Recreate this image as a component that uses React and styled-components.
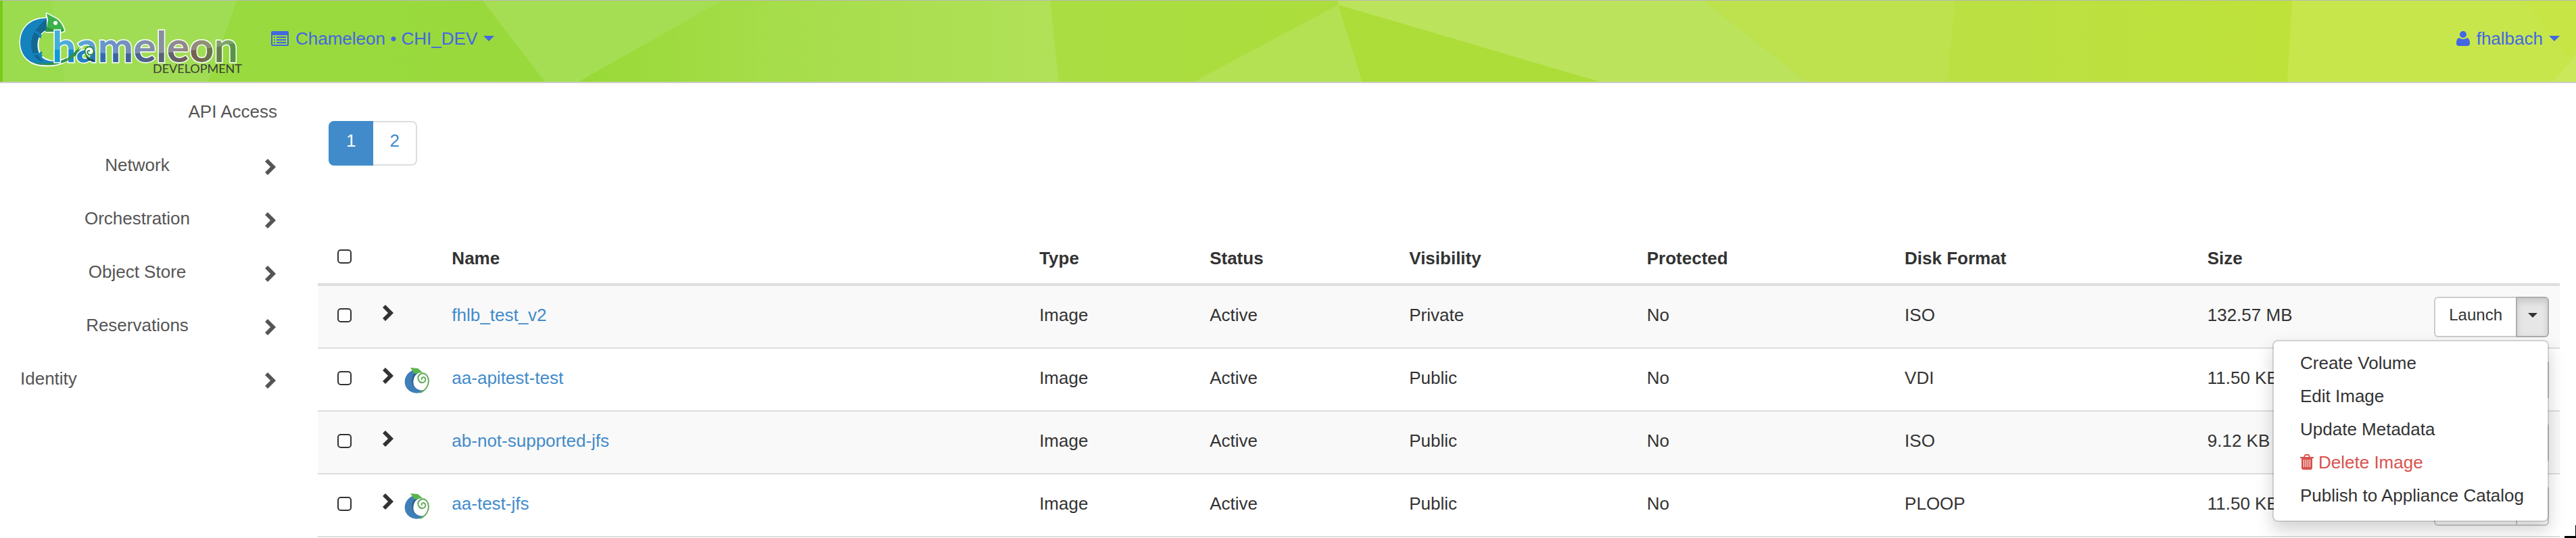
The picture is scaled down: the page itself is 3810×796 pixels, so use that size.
import React from 'react';
import styled, { createGlobalStyle, css } from 'styled-components';

const GlobalStyle = createGlobalStyle`
  *, *::before, *::after { box-sizing: border-box; }
  body {
    margin: 0;
    background: #fff;
    color: #333;
    font: 26px/38px "Liberation Sans", Arial, sans-serif;
  }
  button, input { font: inherit; color: inherit; }
  a { text-decoration: none; }
  ul { list-style: none; margin: 0; padding: 0; }
`;

const Header = styled.header`
  position: relative;
  display: flex;
  align-items: flex-start;
  height: 123px;
  padding: 0 24px 0 28px;
  border-top: 1px solid #b8b8b8;
  border-bottom: 2px solid #ccc;
  background: #a9de44;
`;

const Backdrop = styled.svg`
  position: absolute;
  inset: 0;
  width: 100%;
  height: 100%;
`;

const Brand = styled.a`
  position: relative;
  display: block;
  height: 120px;
  margin-right: 33px;
  svg { display: block; }
`;

const NavMenu = styled.button`
  position: relative;
  display: flex;
  align-items: center;
  height: 38px;
  margin-top: 37px;
  margin-left: ${(p) => (p.$right ? 'auto' : '0')};
  padding: 0;
  border: 0;
  background: none;
  color: #4366e4;
  cursor: pointer;
`;

const NavLabel = styled.span`
  margin: 0 9px 0 10px;
`;

const Caret = styled.span`
  width: 0;
  height: 0;
  border: solid transparent;
  border-width: ${(p) => (p.$small ? '7px 7px 0' : '8px 8px 0')};
  border-top-color: currentColor;
`;

const Columns = styled.div`
  display: flex;
  align-items: flex-start;
  padding-right: 24px;
`;

const Sidebar = styled.nav`
  flex: none;
  width: 470px;
  padding: 21px 58px 0 30px;
`;

const SideLink = styled.a`
  display: flex;
  align-items: center;
  justify-content: space-between;
  height: 79px;
  padding-bottom: 37px;
  color: #555;
  svg { margin: 6px 4px 0 0; }
`;

const SideText = styled.span`
  ${(p) => p.$align === 'center' && css`width: 346px; text-align: center;`}
  ${(p) => p.$align === 'right' && css`width: 100%; padding-right: 2px; text-align: right;`}
`;

const Main = styled.main`
  flex: 1;
  min-width: 0;
  padding-top: 56px;
`;

const Pagination = styled.ul`
  display: flex;
  height: 66px;
  margin: 0 0 91px 16px;
`;

const PageLink = styled.a`
  display: block;
  height: 66px;
  padding: 8px 24px;
  border: 2px solid ${(p) => (p.$active ? '#428bca' : '#ddd')};
  border-left-width: ${(p) => (p.$active ? '2px' : '0')};
  border-radius: ${(p) => (p.$active ? '8px 0 0 8px' : '0 8px 8px 0')};
  background: ${(p) => (p.$active ? '#428bca' : '#fff')};
  color: ${(p) => (p.$active ? '#fff' : '#428bca')};
`;

const Table = styled.table`
  width: 100%;
  table-layout: fixed;
  border-collapse: separate;
  border-spacing: 0;
`;

const HeadCell = styled.th`
  height: 87px;
  padding: 27px 16px 18px;
  border-bottom: 4px solid #ddd;
  text-align: left;
  vertical-align: top;
  font-weight: bold;
`;

const Row = styled.tr`
  background: ${(p) => (p.$striped ? '#f9f9f9' : '#fff')};
`;

const Cell = styled.td`
  height: 93px;
  padding: 24px 16px 0;
  border-bottom: 2px solid #ddd;
  vertical-align: top;
  white-space: nowrap;
`;

const ActionCell = styled(Cell)`
  padding-top: 16px;
`;

const CheckBox = styled.input`
  appearance: none;
  display: block;
  width: 21px;
  height: 21px;
  margin: ${(p) => (p.$head ? '6px' : '9px')} 0 0 13px;
  border: 2px solid #333;
  border-radius: 5px;
  background: #fff;
`;

const Expander = styled.button`
  display: flex;
  align-items: flex-start;
  gap: 16px;
  padding: 4px 0 0;
  border: 0;
  background: none;
  svg { display: block; }
`;

const NameLink = styled.a`
  color: #428bca;
`;

const ButtonGroup = styled.div`
  position: relative;
  display: flex;
  justify-content: flex-end;
`;

const ActionButton = styled.button`
  flex: none;
  height: 60px;
  padding: 0 20px 6px;
  border: 2px solid #ccc;
  border-right: 0;
  border-radius: 6px 0 0 6px;
  background: #fff;
  font-size: 24px;
`;

const ToggleButton = styled.button`
  display: flex;
  flex: none;
  align-items: center;
  justify-content: center;
  width: 49px;
  height: 60px;
  padding: 0 0 6px;
  border: 2px solid ${(p) => (p.$open ? '#adadad' : '#ccc')};
  border-radius: 0 6px 6px 0;
  background: ${(p) => (p.$open ? '#e6e6e6' : '#fff')};
  box-shadow: ${(p) => (p.$open ? 'inset 0 6px 10px rgba(0, 0, 0, 0.125)' : 'none')};
`;

const Dropdown = styled.ul`
  position: absolute;
  top: 64px;
  right: 0;
  z-index: 10;
  width: 409px;
  padding: 10px 0;
  border: 2px solid rgba(0, 0, 0, 0.15);
  border-radius: 8px;
  background: #fff;
  background-clip: padding-box;
  box-shadow: 0 12px 24px rgba(0, 0, 0, 0.175);
`;

const DropdownItem = styled.button`
  display: flex;
  align-items: center;
  gap: 7px;
  width: 100%;
  height: 49px;
  padding: 0 39px 6px;
  border: 0;
  background: none;
  color: ${(p) => (p.$danger ? '#d9534f' : '#333')};
  text-align: left;
  white-space: nowrap;
`;

const CornerMark = styled.svg`
  position: absolute;
  top: 777px;
  right: 0;
`;

const HeaderBackdrop = () => (
  <Backdrop viewBox="0 0 3810 120" preserveAspectRatio="none" aria-hidden="true">
    <defs>
      <linearGradient id="bg">
        <stop offset="0" stopColor="#98dc42" />
        <stop offset="0.19" stopColor="#99d93c" />
        <stop offset="0.4" stopColor="#a9dd42" />
        <stop offset="0.52" stopColor="#acdd3c" />
        <stop offset="0.76" stopColor="#bae043" />
        <stop offset="0.89" stopColor="#bfe23a" />
        <stop offset="1" stopColor="#c6e648" />
      </linearGradient>
      <linearGradient id="fold">
        <stop offset="0" stopColor="#98d936" />
        <stop offset="0.4" stopColor="#a6dd4a" />
        <stop offset="1" stopColor="#b1e158" />
      </linearGradient>
    </defs>
    <rect width="3810" height="120" fill="url(#bg)" />
    <path d="M4 0H350L308 120H4Z" fill="#a0dd55" />
    <path d="M4 0H76L96 120H4Z" fill="#9bdb4e" />
    <rect width="4" height="120" fill="#79c91c" />
    <path d="M714 0H1068L856 120H806Z" fill="#a5de53" />
    <path d="M1068 0H1553L1566 120H856Z" fill="url(#fold)" />
    <path d="M1980 6L2015 120H1766Z" fill="#b4e154" />
    <path d="M1979 0H2520L2672 120H2366L1979 10Z" fill="#bce35c" />
    <path d="M1979 6L2366 120H2015Z" fill="#acdd38" />
    <path d="M2520 0H2892L2880 120H2672Z" fill="#bde24d" />
    <path d="M3390 0H3810V120H3383Z" fill="#c6e64c" />
    <path d="M3734 0H3810V70L3800 85Z" fill="#c7e545" />
    <path d="M3810 80V120H3776Z" fill="#cae85a" />
  </Backdrop>
);

const BrandLogo = () => (
  <svg width="340" height="120" viewBox="28 1 340 120" role="img" aria-label="Chameleon Development">
    <defs>
      <linearGradient id="word" x1="0" x2="1">
        <stop offset="0" stopColor="#3db0dc" />
        <stop offset="0.12" stopColor="#55a9d6" />
        <stop offset="0.3" stopColor="#6b93c8" />
        <stop offset="0.58" stopColor="#8b8e9c" />
        <stop offset="0.72" stopColor="#95877d" />
        <stop offset="0.86" stopColor="#84a06b" />
        <stop offset="1" stopColor="#5cb556" />
      </linearGradient>
      <linearGradient id="shade" x1="0" x2="1">
        <stop offset="0" stopColor="#0c9fdc" />
        <stop offset="0.3" stopColor="#3566ac" />
        <stop offset="0.62" stopColor="#626269" />
        <stop offset="0.72" stopColor="#77604f" />
        <stop offset="1" stopColor="#4fa545" />
      </linearGradient>
      <pattern id="ink" patternUnits="userSpaceOnUse" x="76" y="40" width="290" height="60">
        <rect width="290" height="60" fill="url(#word)" />
        <path d="M0 34Q40 31 78 39H150Q220 37 290 20V60H0Z" fill="url(#shade)" />
      </pattern>
    </defs>
    <g fill="#fff" stroke="#fff" strokeWidth="3" strokeLinejoin="round">
      <path d="M69 27C42 27 30 44 30 63C30 84 46 98 70 97C92 97 108 87 121 70C112 80 100 87 88 90C82 93 66 90 60 82C52 68 56 46 70 44Z" />
      <path d="M69 20L84 28C89 31 95 41 95 46L90 47H68L70 29Z" />
    </g>
    <path d="M69 27C42 27 30 44 30 63C30 83 45 97 67 96C76 95 82 92 86 90C74 92 64 89 59 81C52 66 56 47 69 45Z" fill="#1482bd" />
    <path d="M69 28C56 38 46 50 46 66C46 80 54 90 64 91C58 86 56 80 55 72C54 58 60 47 69 44Z" fill="#136791" />
    <path d="M46 91Q62 96 82 92Q104 87 121 70Q112 87 98 91Q70 102 46 91Z" fill="#2f9146" />
    <path d="M69 20L84 28C89 31 95 41 95 46L90 47H68L71 29Z" fill="#3bb14a" />
    <path d="M70 40Q82 46 94 43L93 47H67Z" fill="#32923f" />
    <path d="M50 46L58 50L61 53M58 50L60 56M49 80L59 80L62 77M59 80L62 84" fill="none" stroke="#1482bd" strokeWidth="3" />
    <circle cx="82" cy="34" r="3" fill="#fff" />
    <text x="77" y="92" fontFamily="Lato, sans-serif" fontWeight="700" fontSize="63" fill="url(#ink)" stroke="#fff" strokeWidth="3" paintOrder="stroke">hameleon</text>
    <path d="M100 86L118 70L112 82L100 90Z" fill="#2f9146" />
    <circle cx="132" cy="76" r="6" fill="#fff" />
    <path d="M127 82L140 90H134Q128 88 127 82Z" fill="#12222c" />
    <path d="M136 88C124 84 122 70 132 69C141 70 140 81 133 81C128 80 128 74 133 75" fill="none" stroke="#2f8f45" strokeWidth="2" />
    <text x="358" y="108" textAnchor="end" fontFamily="Lato, sans-serif" fontSize="18" fill="#3c4038">DEVELOPMENT</text>
  </svg>
);

const Chevron = () => (
  <svg width="16" height="24" viewBox="0 0 16 24" aria-hidden="true">
    <path d="M0 4L4 0L16 12L4 24L0 20L8 12Z" fill="currentColor" />
  </svg>
);

const ApplianceIcon = () => (
  <svg width="38" height="40" viewBox="0 0 38 40" aria-hidden="true">
    <path d="M14 3C0 8 -3 24 5 32C12 40 26 39 31 32C24 36 14 31 12 22C11 15 15 11 20 9Z" fill="#3f7fb8" />
    <path d="M15 8C8 18 11 30 22 33C13 31 10 19 18 9Z" fill="#2d5d8a" />
    <path d="M9 0L20 1L27 7L15 9Z" fill="#5cb54c" />
    <path d="M23 37C35 33 39 19 33 11C27 5 18 11 21 18C24 25 33 22 31 16C29 12 24 15 26 18" fill="none" stroke="#64ac5c" strokeWidth="2" />
  </svg>
);

const ProjectIcon = () => (
  <svg width="26" height="22" viewBox="0 0 26 22" aria-hidden="true">
    <path fillRule="evenodd" d="M2 0H24Q26 0 26 2V20Q26 22 24 22H2Q0 22 0 20V2Q0 0 2 0ZM2 6V20H24V6Z" fill="currentColor" />
    <path d="M4 8H6V10H4ZM4 12H6V14H4ZM4 16H6V18H4ZM8 8H22V10H8ZM8 12H22V14H8ZM8 16H22V18H8Z" fill="currentColor" />
  </svg>
);

const UserIcon = () => (
  <svg width="20" height="22" viewBox="0 0 20 22" aria-hidden="true">
    <circle cx="10" cy="5" r="5" fill="currentColor" />
    <path d="M4 10Q10 14 16 10Q20 11 20 18Q20 22 16 22H4Q0 22 0 18Q0 11 4 10Z" fill="currentColor" />
  </svg>
);

const TrashIcon = () => (
  <svg width="20" height="23" viewBox="0 0 20 23" aria-hidden="true">
    <path fillRule="evenodd" d="M0 4H5L7 0H13L15 4H20V6H18V20Q18 23 15 23H5Q2 23 2 20V6H0ZM7 4H13L12 2H8ZM5 8V19H6V8ZM8 8V19H9V8ZM11 8V19H12V8ZM14 8V19H15V8Z" fill="currentColor" />
  </svg>
);

const sideItems = [
  { label: 'API Access', align: 'right' },
  { label: 'Network', align: 'center', arrow: true },
  { label: 'Orchestration', align: 'center', arrow: true },
  { label: 'Object Store', align: 'center', arrow: true },
  { label: 'Reservations', align: 'center', arrow: true },
  { label: 'Identity', align: 'left', arrow: true },
];

const columnWidths = ['2.4%', '3.1%', '26.2%', '7.6%', '8.9%', '10.6%', '11.5%', '13.5%', '9.7%'];
const headings = ['Name', 'Type', 'Status', 'Visibility', 'Protected', 'Disk Format', 'Size'];

const images = [
  { name: 'fhlb_test_v2', visibility: 'Private', format: 'ISO', size: '132.57 MB', open: true },
  { name: 'aa-apitest-test', visibility: 'Public', format: 'VDI', size: '11.50 KB', appliance: true },
  { name: 'ab-not-supported-jfs', visibility: 'Public', format: 'ISO', size: '9.12 KB' },
  { name: 'aa-test-jfs', visibility: 'Public', format: 'PLOOP', size: '11.50 KB', appliance: true },
];

const RowMenu = () => (
  <Dropdown>
    <li><DropdownItem>Create Volume</DropdownItem></li>
    <li><DropdownItem>Edit Image</DropdownItem></li>
    <li><DropdownItem>Update Metadata</DropdownItem></li>
    <li><DropdownItem $danger><TrashIcon />Delete Image</DropdownItem></li>
    <li><DropdownItem>Publish to Appliance Catalog</DropdownItem></li>
  </Dropdown>
);

const ImageRow = ({ image, striped }) => (
  <Row $striped={striped}>
    <Cell><CheckBox type="checkbox" aria-label={`Select ${image.name}`} /></Cell>
    <Cell>
      <Expander aria-label={`Expand ${image.name}`}>
        <Chevron />
        {image.appliance && <ApplianceIcon />}
      </Expander>
    </Cell>
    <Cell><NameLink href="#">{image.name}</NameLink></Cell>
    <Cell>Image</Cell>
    <Cell>Active</Cell>
    <Cell>{image.visibility}</Cell>
    <Cell>No</Cell>
    <Cell>{image.format}</Cell>
    <Cell>{image.size}</Cell>
    <ActionCell>
      <ButtonGroup>
        <ActionButton>Launch</ActionButton>
        <ToggleButton $open={image.open} aria-label="More actions"><Caret $small /></ToggleButton>
        {image.open && <RowMenu />}
      </ButtonGroup>
    </ActionCell>
  </Row>
);

export default function App() {
  return (
    <>
      <GlobalStyle />
      <Header>
        <HeaderBackdrop />
        <Brand href="#"><BrandLogo /></Brand>
        <NavMenu>
          <ProjectIcon />
          <NavLabel>Chameleon • CHI_DEV</NavLabel>
          <Caret />
        </NavMenu>
        <NavMenu $right>
          <UserIcon />
          <NavLabel>fhalbach</NavLabel>
          <Caret />
        </NavMenu>
      </Header>
      <Columns>
        <Sidebar>
          {sideItems.map((item) => (
            <SideLink href="#" key={item.label}>
              <SideText $align={item.align}>{item.label}</SideText>
              {item.arrow && <Chevron />}
            </SideLink>
          ))}
        </Sidebar>
        <Main>
          <Pagination>
            <li><PageLink href="#" $active>1</PageLink></li>
            <li><PageLink href="#">2</PageLink></li>
          </Pagination>
          <Table>
            <colgroup>
              {columnWidths.map((width, i) => <col key={i} width={width} />)}
              <col />
            </colgroup>
            <thead>
              <tr>
                <HeadCell><CheckBox type="checkbox" $head aria-label="Select all" /></HeadCell>
                <HeadCell />
                {headings.map((h) => <HeadCell key={h}>{h}</HeadCell>)}
                <HeadCell />
              </tr>
            </thead>
            <tbody>
              {images.map((image, i) => (
                <ImageRow key={image.name} image={image} striped={i % 2 === 0} />
              ))}
            </tbody>
          </Table>
        </Main>
      </Columns>
      <CornerMark width="17" height="19" viewBox="0 0 17 19" aria-hidden="true">
        <path d="M16 0H17V19H0V16H16Z" fill="#000" />
      </CornerMark>
    </>
  );
}
